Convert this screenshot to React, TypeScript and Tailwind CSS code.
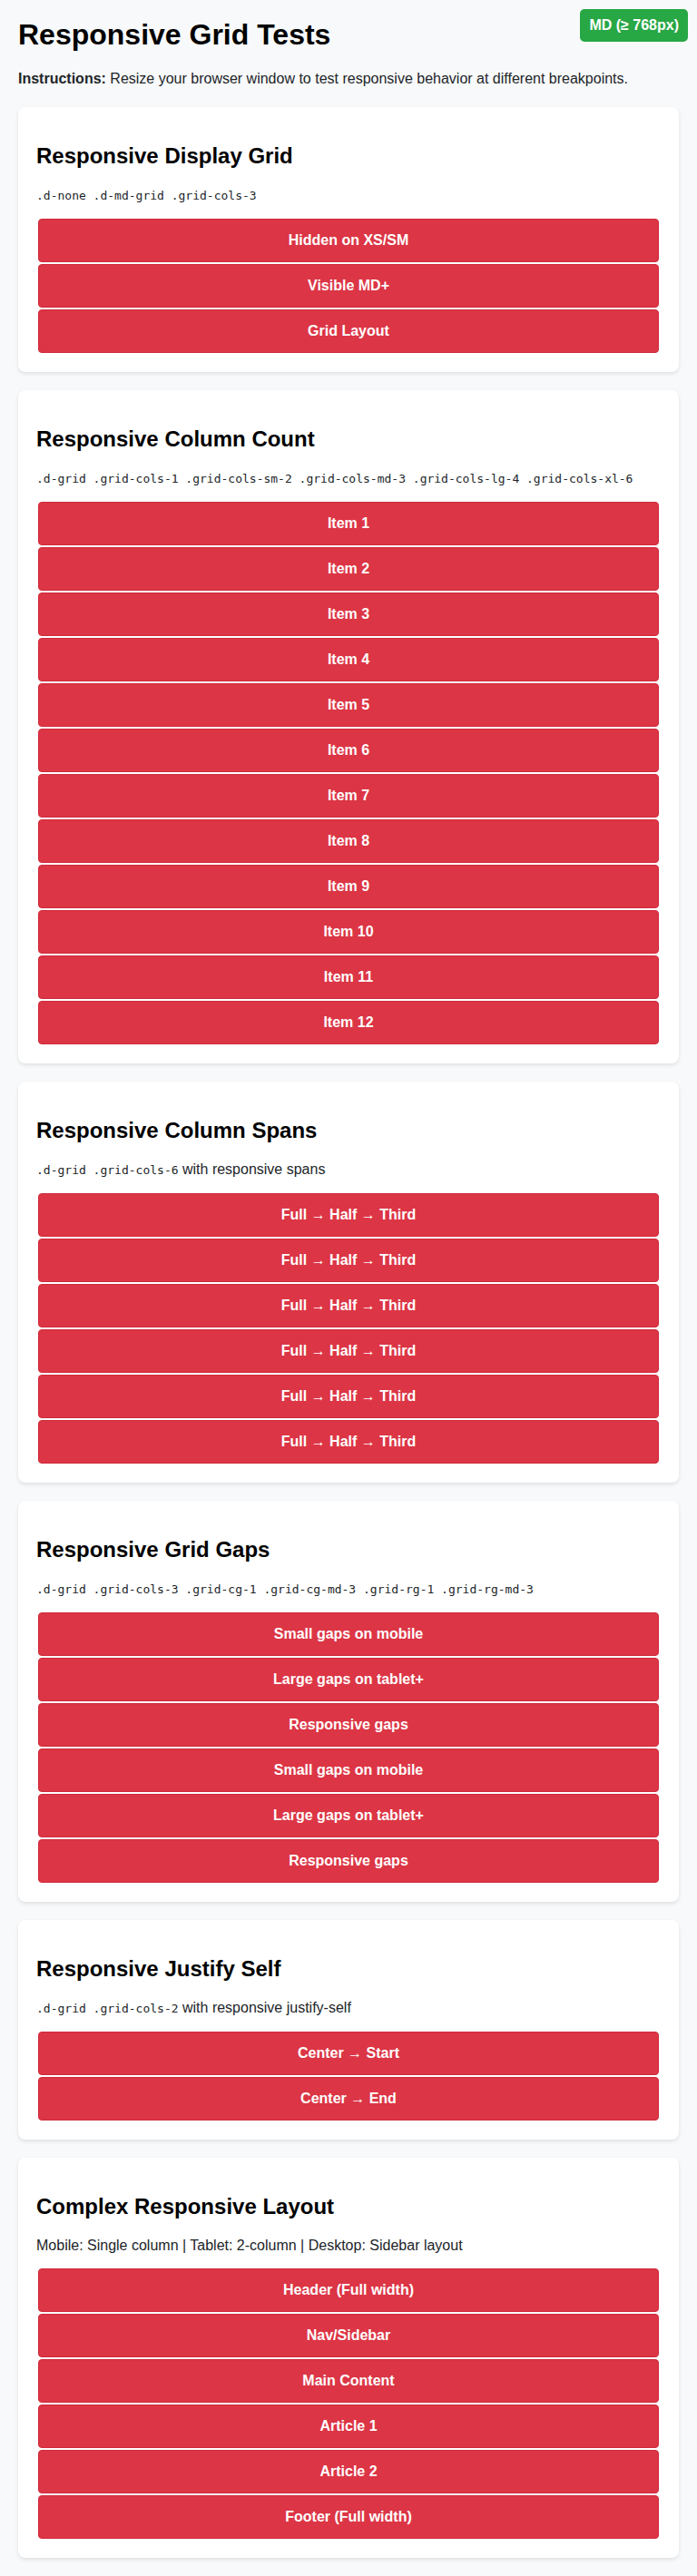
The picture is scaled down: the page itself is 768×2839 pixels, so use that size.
import React from "react";

type Section = {
  title: string;
  code?: string;
  note?: string;
  items: string[];
};

const sections: Section[] = [
  {
    title: "Responsive Display Grid",
    code: ".d-none .d-md-grid .grid-cols-3",
    items: ["Hidden on XS/SM", "Visible MD+", "Grid Layout"],
  },
  {
    title: "Responsive Column Count",
    code: ".d-grid .grid-cols-1 .grid-cols-sm-2 .grid-cols-md-3 .grid-cols-lg-4 .grid-cols-xl-6",
    items: Array.from({ length: 12 }, (_, i) => `Item ${i + 1}`),
  },
  {
    title: "Responsive Column Spans",
    code: ".d-grid .grid-cols-6",
    note: " with responsive spans",
    items: Array.from({ length: 6 }, () => "Full → Half → Third"),
  },
  {
    title: "Responsive Grid Gaps",
    code: ".d-grid .grid-cols-3 .grid-cg-1 .grid-cg-md-3 .grid-rg-1 .grid-rg-md-3",
    items: [
      "Small gaps on mobile",
      "Large gaps on tablet+",
      "Responsive gaps",
      "Small gaps on mobile",
      "Large gaps on tablet+",
      "Responsive gaps",
    ],
  },
  {
    title: "Responsive Justify Self",
    code: ".d-grid .grid-cols-2",
    note: " with responsive justify-self",
    items: ["Center → Start", "Center → End"],
  },
  {
    title: "Complex Responsive Layout",
    note: "Mobile: Single column | Tablet: 2-column | Desktop: Sidebar layout",
    items: [
      "Header (Full width)",
      "Nav/Sidebar",
      "Main Content",
      "Article 1",
      "Article 2",
      "Footer (Full width)",
    ],
  },
];

function GridCard({ section }: { section: Section }) {
  return (
    <section className="rounded-lg bg-white p-5 shadow-[0_2px_4px_rgba(0,0,0,0.1)]">
      <h2 className="my-5 text-[24px] font-bold leading-[27.6px] text-black">{section.title}</h2>
      <p className="mb-4 text-[16px] leading-[18.4px] text-[#212529]">
        {section.code ? (
          <code className="font-['DejaVu_Sans_Mono',monospace] text-[13px]">{section.code}</code>
        ) : null}
        {section.note}
      </p>
      <div className="flex flex-col gap-[2px] px-[2px] pb-[1px]">
        {section.items.map((label, i) => (
          <div
            key={i}
            className="rounded border border-[#cf2a3b] bg-[#dc3545] py-[14px] text-center text-[16px] font-bold leading-[18px] text-white"
          >
            {label}
          </div>
        ))}
      </div>
    </section>
  );
}

export default function App() {
  return (
    <div className="min-h-screen bg-[#f8f9fa] p-5 font-['Liberation_Sans',Arial,sans-serif] text-[#212529]">
      {/* Breakpoint badge */}
      <div className="fixed right-[10px] top-[10px] rounded-[5px] bg-[#28a745] px-[10px] py-[9px] text-[16px] font-bold leading-[18.4px] text-white">
        MD (≥ 768px)
      </div>

      <h1 className="mb-[21px] text-[32px] font-bold leading-[37px] text-black">Responsive Grid Tests</h1>
      <p className="mb-[22px] text-[16px] leading-[18.4px]">
        <strong>Instructions:</strong> Resize your browser window to test responsive behavior at different
        breakpoints.
      </p>

      <div className="flex flex-col gap-5">
        {sections.map((s) => (
          <GridCard key={s.title} section={s} />
        ))}
      </div>
    </div>
  );
}
